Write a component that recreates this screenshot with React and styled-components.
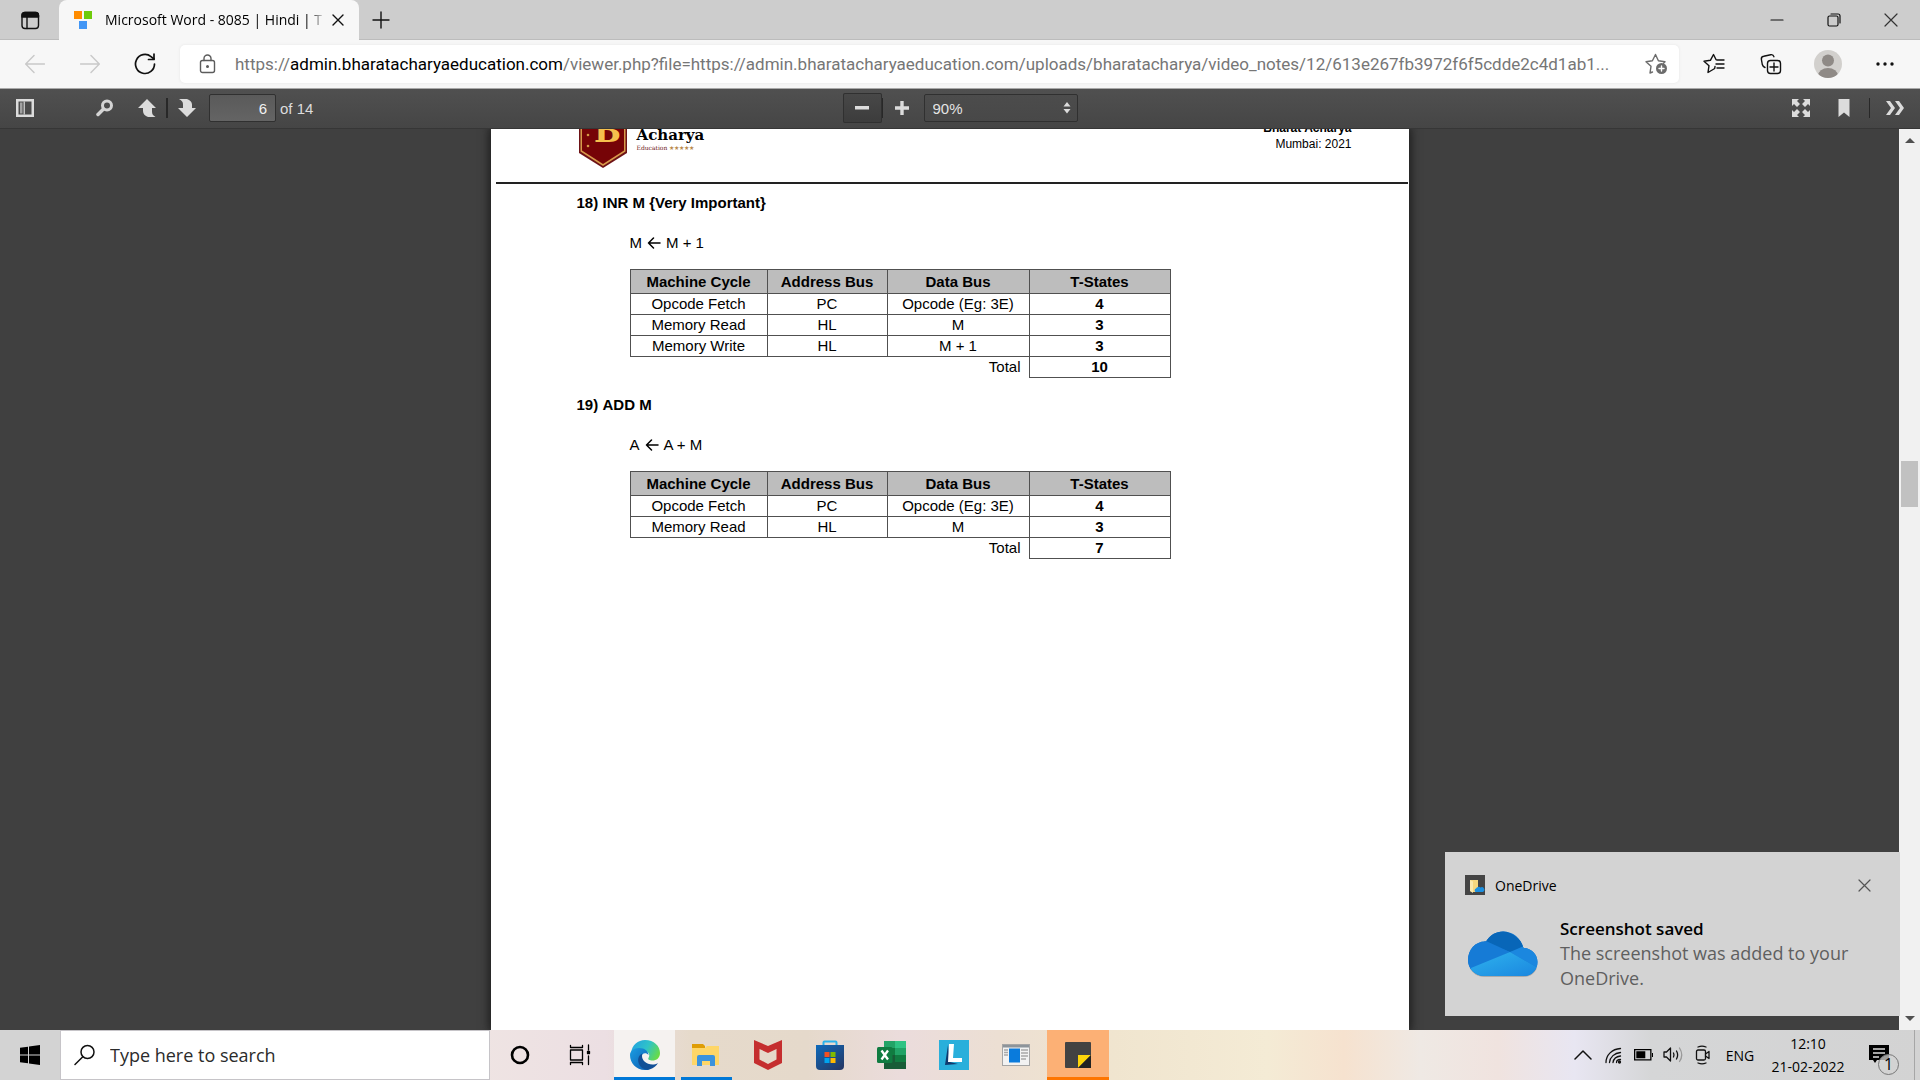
import React from "react";
import styled, { createGlobalStyle } from "styled-components";

const UI = `"Open Sans", "Noto Sans", sans-serif`;
const DOC = `"Liberation Sans", Arial, sans-serif`;

const Global = createGlobalStyle`
  *, *::before, *::after { box-sizing: border-box; }
  body { margin: 0; font-family: ${UI}; color: #000; background: #404040; }
  button, input, select { font: inherit; color: inherit; }
  button { border: 0; padding: 0; background: none; }
  svg { display: block; flex: none; }
`;

const Screen = styled.div`
  height: 100vh;
  display: flex;
  flex-direction: column;
  overflow: hidden;
`;

/* ---------- browser frame ---------- */

const TabStrip = styled.header`
  display: flex;
  height: 40px;
  flex: none;
  padding-right: 1px;
  background: #cdcdcd;
  box-shadow: inset 0 -1px #bcbcbc;
`;

const StripButton = styled.button`
  display: grid;
  place-items: center;
  width: ${(p) => p.$w}px;
  height: 40px;
`;

const Tab = styled.div`
  display: flex;
  align-items: center;
  width: 300px;
  padding: 0 11px 0 15px;
  background: #f7f7f7;
  border-radius: 8px 8px 0 0;
`;

const TabTitle = styled.span`
  flex: 1;
  margin-left: 13px;
  overflow: hidden;
  white-space: nowrap;
  font-size: 14px;
  line-height: 20px;
  mask-image: linear-gradient(to right, #000 91%, transparent 99%);
`;

const TabClose = styled.button`
  display: grid;
  place-items: center;
  width: 20px;
  height: 20px;
`;

const Spacer = styled.div`
  flex: 1;
`;

const AddressRow = styled.div`
  display: flex;
  align-items: center;
  height: 49px;
  flex: none;
  padding: 0 7px 1px;
  background: #f7f7f7;
  border-bottom: 1px solid #a9a9a9;
`;

const NavButton = styled.button`
  display: grid;
  place-items: center;
  width: ${(p) => p.$w}px;
  height: 40px;
`;

const AddressField = styled.div`
  display: flex;
  align-items: center;
  flex: 1;
  min-width: 0;
  height: 38px;
  margin: 0 6px 0 8px;
  padding: 0 12px 0 19px;
  gap: 18px;
  background: #fff;
  border-radius: 5px;
  box-shadow: 0 0 3px #e4e4e4;
`;

const Url = styled.div`
  flex: 1;
  min-width: 0;
  overflow: hidden;
  text-overflow: ellipsis;
  white-space: nowrap;
  font-family: Roboto, ${UI};
  font-size: 17px;
  line-height: 24px;
  color: #767676;
  b { font-weight: 400; color: #000; }
`;

/* ---------- PDF toolbar ---------- */

const PdfBar = styled.div`
  display: grid;
  grid-template-columns: 1fr auto 1fr;
  height: 40px;
  flex: none;
  padding-bottom: 2px;
  background: linear-gradient(#505050, #454545);
  box-shadow: inset 0 -1px #363636;
  font-family: ${DOC};
  font-size: 15px;
  color: #dcdcdc;
`;

const BarGroup = styled.div`
  display: flex;
  align-items: center;
  justify-content: ${(p) => p.$justify || "flex-start"};
  padding: ${(p) => p.$pad || "0"};
`;

const BarButton = styled.button`
  display: grid;
  place-items: center;
  width: ${(p) => p.$w || 38}px;
  height: 30px;
  color: #dcdcdc;
  border-radius: 2px;
  ${(p) => p.$raised && `background: linear-gradient(#484848, #3c3c3c); box-shadow: inset 0 0 0 1px #303030;`}
`;

const FindButton = styled(BarButton)`
  justify-items: end;
  padding-right: 14px;
`;

const Divider = styled.span`
  width: ${(p) => p.$w || 1}px;
  height: 20px;
  background: #282828;
`;

const PageInput = styled.input`
  width: 67px;
  height: 28px;
  margin-left: 3px;
  padding: 0 8px;
  text-align: right;
  color: #f2f2f2;
  background: linear-gradient(#5a5a5a, #646464);
  border: 1px solid #303030;
  border-radius: 2px;
`;

const PageTotal = styled.label`
  margin-left: 4px;
`;

const SelectWrap = styled.div`
  display: grid;
  align-items: center;
  width: 154px;
  margin-left: 3px;
  > * { grid-area: 1 / 1; }
  > svg { justify-self: end; margin-right: 7px; pointer-events: none; }
`;

const ZoomSelect = styled.select`
  appearance: none;
  width: 100%;
  height: 28px;
  padding: 0 8px;
  color: #e4e4e4;
  background: linear-gradient(#4c4c4c, #484848);
  border: 1px solid #303030;
  border-radius: 2px;
`;

/* ---------- document ---------- */

const Viewer = styled.main`
  display: flex;
  flex: 1;
  min-height: 0;
  background: #404040;
`;

const Canvas = styled.div`
  display: flex;
  justify-content: center;
  flex: 1;
  min-width: 0;
`;

const Sheet = styled.article`
  width: 918px;
  background: #fff;
  box-shadow: 0 0 9px 2px #1c1c1c;
  clip-path: inset(0 -16px);
  font-family: ${DOC};
`;

const SheetHeader = styled.div`
  display: flex;
  justify-content: space-between;
  align-items: flex-end;
  height: 55px;
  margin: 0 1px 0 5px;
  padding: 0 56px 13px 82px;
  overflow: hidden;
  border-bottom: 2px solid #222;
`;

const Brand = styled.div`
  display: flex;
  align-items: flex-end;
  gap: 9px;
`;

const BrandText = styled.div`
  padding-bottom: 17px;
`;

const BrandName = styled.div`
  font-family: "DejaVu Serif", serif;
  font-weight: 700;
  font-size: 15px;
  line-height: 17px;
`;

const BrandTag = styled.div`
  font-family: "DejaVu Serif", serif;
  font-size: 6px;
  line-height: 8px;
  color: #6b1420;
  i { font-style: normal; color: #b98a4c; }
`;

const Author = styled.div`
  padding-bottom: 17px;
  text-align: right;
  font-size: 12px;
  line-height: 16px;
`;

const Section = styled.section`
  padding: ${(p) => (p.$first ? 9 : 17)}px 0 0 86px;
`;

const Title = styled.h2`
  display: flex;
  margin: 0;
  font-size: 15px;
  line-height: 20px;
  span { width: 26px; }
`;

const Expression = styled.p`
  display: flex;
  align-items: center;
  gap: 5px;
  margin: 20px 0 16px 53px;
  font-size: 15px;
  line-height: 20px;
`;

const CycleTable = styled.table`
  width: 541px;
  margin-left: 53px;
  table-layout: fixed;
  border-collapse: collapse;
  font-size: 15px;
  line-height: 16px;
  text-align: center;
`;

const Th = styled.th`
  height: 24px;
  padding: 0;
  background: #bdbdbd;
  border: 1px solid #505050;
`;

const Td = styled.td`
  height: 21px;
  padding: 0;
  border: 1px solid #505050;
  font-weight: ${(p) => (p.$bold ? 700 : 400)};
`;

const TotalLabel = styled.td`
  height: 21px;
  padding: 0 8px 0 0;
  text-align: right;
`;

const Scrollbar = styled.div`
  display: flex;
  flex-direction: column;
  align-items: center;
  width: 21px;
  padding: 8px 0;
  background: #f1f1f1;
`;

const Thumb = styled.div`
  width: 17px;
  height: 46px;
  background: #c1c1c1;
`;

const Track = styled.div`
  flex: ${(p) => p.$grow} 0 0;
`;

/* ---------- notification ---------- */

const Toast = styled.aside`
  position: absolute;
  right: 20px;
  bottom: 64px;
  width: 455px;
  height: 164px;
  padding: 21px 21px 21px 20px;
  background: #d3d3d3;
`;

const ToastHead = styled.div`
  display: flex;
  align-items: center;
  gap: 10px;
  height: 24px;
  font-size: 14px;
`;

const ToastClose = styled.button`
  display: grid;
  place-items: center;
  width: 30px;
  height: 24px;
`;

const ToastBody = styled.div`
  display: flex;
  gap: 22px;
  padding-top: 19px;
`;

const ToastText = styled.div`
  width: 310px;
  font-size: 18px;
  line-height: 25px;
  color: #5f5f5f;
  strong { display: block; font-size: 17px; font-weight: 600; color: #000; }
`;

const CloudSlot = styled.div`
  padding: 15px 0 0 3px;
`;

/* ---------- taskbar ---------- */

const Taskbar = styled.footer`
  display: flex;
  align-items: stretch;
  height: 50px;
  flex: none;
  background: linear-gradient(
    to right,
    #d3d3d3 0, #d3d3d3 4%, #efe4e3 25%, #ecdfe3 31.5%, #e6dacb 36%,
    #e5d9cb 42%, #ebdcdc 47%, #ecdfd3 52%, #f0e5cf 58%, #f4ebd5 66%,
    #f6e2cf 70%, #efe9e4 74%, #f0e3df 78%, #e8e6f2 82%, #d5d6d7 86%, #d3d3d3 100%
  );
`;

const StartButton = styled.button`
  display: grid;
  place-items: center;
  width: 60px;
`;

const SearchBox = styled.label`
  display: flex;
  align-items: center;
  width: 430px;
  padding: 0 13px;
  gap: 14px;
  background: #fff;
  border: 1px solid #c6c4c8;
  input {
    flex: 1;
    border: 0;
    padding: 0;
    outline: 0;
    background: none;
    font-size: 18px;
    line-height: 24px;
  }
  input::placeholder { color: #2b2b2b; opacity: 1; }
`;

const TaskButton = styled.button`
  display: grid;
  place-items: center;
  width: ${(p) => p.$w || 62}px;
  background: ${(p) => p.$bg || "none"};
  box-shadow: ${(p) => (p.$line ? `inset 0 -3px ${p.$line}` : "none")};
`;

const RunningButton = styled(TaskButton)`
  background: linear-gradient(#0078d7, #0078d7) center bottom / 51px 3px no-repeat;
`;

const AppGroup = styled.div`
  display: flex;
  margin-left: 4px;
`;

const Tray = styled.div`
  display: flex;
  align-items: center;
  margin-left: auto;
`;

const TrayButton = styled.button`
  display: grid;
  place-items: center;
  width: ${(p) => p.$w || 30}px;
  height: 50px;
  font-size: 14px;
`;

const Clock = styled.time`
  width: 92px;
  text-align: center;
  font-size: 14px;
  line-height: 23px;
`;

const DesktopEdge = styled.span`
  align-self: stretch;
  width: 6px;
  border-left: 1px solid #a6a6a6;
`;

/* ---------- icons ---------- */

const Line = ({ w = 20, h = w, sw = 1.4, c = "#111", children }) => (
  <svg width={w} height={h} viewBox={`0 0 ${w} ${h}`} fill="none" stroke={c} strokeWidth={sw} strokeLinecap="round" strokeLinejoin="round" aria-hidden="true">
    {children}
  </svg>
);
const Fill = ({ w = 20, h = w, c = "#dcdcdc", children }) => (
  <svg width={w} height={h} viewBox={`0 0 ${w} ${h}`} fill={c} aria-hidden="true">{children}</svg>
);

const TabActions = () => (
  <Line sw={1.4}>
    <rect x="2" y="2.5" width="16.5" height="16" rx="3" />
    <path d="M2 7V5.500a3 3 0 0 1 3-3h10.500a3 3 0 0 1 3 3V7z" fill="#111" />
    <path d="M7 7v11.500" />
  </Line>
);
const Favicon = () => (
  <Fill w={18}>
    <rect width="8" height="8" fill="#ff8c00" />
    <rect x="10" width="8" height="8" fill="#6fcb0b" />
    <rect x="5" y="10" width="8" height="8" fill="#4296f5" />
  </Fill>
);
const Cross = ({ s = 10, sw = 1.4, c }) => (
  <Line w={s + 2} sw={sw} c={c}><path d={`M1 1l${s} ${s}M${s + 1} 1L1 ${s + 1}`} /></Line>
);
const Back = () => <Line sw={1.4} c="#c9c9c9"><path d="M19.500 10H1M9 1.500L.7 10 9 18.500" /></Line>;
const Forward = () => <Line sw={1.4} c="#c9c9c9"><path d="M.5 10H19M11 1.500l8.300 8.500L11 18.500" /></Line>;
const Refresh = () => (
  <Line w={22} sw={1.7}>
    <path d="M20.500 11a9.500 9.500 0 1 1-3.500-7.400L20 6" /><path d="M20 1v5.500h-5.500" />
  </Line>
);
const Lock = () => (
  <Line w={18} h={20} c="#5c5c5c">
    <rect x="1.500" y="6.500" width="14" height="12" rx="2" />
    <path d="M5 6.500V4.500a3.500 3.500 0 0 1 7 0v2" /><circle cx="8.500" cy="12.500" r=".8" fill="#5c5c5c" />
  </Line>
);
const StarAdd = () => (
  <Line w={22} c="#6c6c6c">
    <path d="M7.500 19l-2.500 1 1-6.700L1 8.700l6.400-.9L10.500 1.500l2.900 6.300 6.600.9-1.500 1.600" />
    <circle cx="16.500" cy="15.500" r="5.500" fill="#6c6c6c" stroke="none" />
    <path d="M16.500 13v5M14 15.500h5" stroke="#fff" />
  </Line>
);
const Favorites = () => (
  <Line w={22}>
    <path d="M12 13.500l-.3 2L5 19.500l1-6.800L1 8.200l6.400-.9L10.500 1.500l2.600 5.300M14 7h7M13 11h8M14 15h7" />
  </Line>
);
const Collections = () => (
  <Line w={22}>
    <rect x="7.500" y="7.500" width="13" height="13" rx="3" />
    <path d="M14 10v8M10 14h8M5 14.500c-1.600-.6-2.300-1.500-2.700-3L1.400 6.500C1.100 4.700 2 3.500 3.700 3.200l7-1.500c1.500-.3 2.800.4 3.200 2" />
  </Line>
);
const Avatar = () => (
  <Fill w={28}>
    <defs><clipPath id="avatar"><circle cx="14" cy="14" r="14" /></clipPath></defs>
    <g clipPath="url(#avatar)">
      <rect width="28" height="28" fill="#d2d0cd" />
      <circle cx="14" cy="10.500" r="6" fill="#8f8a86" />
      <ellipse cx="14" cy="26" rx="10" ry="8" fill="#8f8a86" />
    </g>
  </Fill>
);
const Dots = () => (
  <Fill w={18} h={4} c="#111"><circle cx="2" cy="2" r="1.700" /><circle cx="9" cy="2" r="1.700" /><circle cx="16" cy="2" r="1.700" /></Fill>
);
const SidebarIcon = () => (
  <Fill w={18}>
    <path fillRule="evenodd" d="M0 0h18v18H0zM2.500 2.500v13h13v-13z" />
    <path d="M4 3.500h2.500v11H4z" opacity=".6" /><path d="M7.500 2.500H9v13H7.500z" opacity=".8" />
  </Fill>
);
const PdfSearch = () => (
  <Line w={18} sw={3} c="#d4d4d4"><circle cx="11" cy="6.500" r="4.500" /><path d="M7.500 10L2 15.500" strokeWidth="3.500" /></Line>
);
const UpArrow = () => <Fill w={18}><path d="M9 0l9 9h-4v3.500c0 2.500 1 4 3.500 5.500H10c-3-1-5-3-5-6V9H0z" /></Fill>;
const DownArrow = () => <Fill w={18}><path d="M9 18l9-9h-4V5.500c0-2.500-2-4.500-5-5.500H1c3 1.500 4 3 4 5.500V9H0z" /></Fill>;
const MinusBar = () => <Fill w={14} h={4}><rect width="14" height="3.500" /></Fill>;
const PlusBar = () => <Fill w={14}><path d="M5.300 0h3.400v5.300H14v3.400H8.700V14H5.300V8.700H0V5.300h5.300z" /></Fill>;
const UpDown = () => <Fill w={8} h={12}><path d="M4 0l3.500 4.500h-7zM4 11.500L.5 7h7z" /></Fill>;
const Fullscreen = () => (
  <Fill w={18}>
    <path d="M0 0h7L5 2l3 3-3 3-3-3-2 2zM18 0v7l-2-2-3 3-3-3 3-3-2-2zM0 18v-7l2 2 3-3 3 3-3 3 2 2zM18 18h-7l2-2-3-3 3-3 3 3 2-2z" />
  </Fill>
);
const Bookmark = () => <Fill w={12} h={18}><path d="M.5 0h11v18L6 13.500.5 18z" /></Fill>;
const Chevrons = () => <Fill w={18} h={14}><path d="M0 0h4l5 7-5 7H0l5-7zM9 0h4l5 7-5 7H9l5-7z" /></Fill>;

const Badge = () => (
  <svg width="50" height="80" viewBox="0 0 50 80" aria-hidden="true">
    <path d="M1 0v64l24 15 24-15V0z" fill="#6d1216" />
    <path d="M2.500 0v62.500L25 77l22.500-14.500V0z" fill="#d89a4b" />
    <path d="M4 0v61.500L25 75l21-13.500V0z" fill="#760407" />
    <g fill="#d39a45"><circle cx="10" cy="46" r="1.300" /><circle cx="10" cy="57" r="1.300" /></g>
    <text x="16" y="53" fontFamily="DejaVu Serif, serif" fontWeight="700" fontSize="32" fill="#f6c04d">B</text>
  </svg>
);
const LeftArrow = () => <Line w={14} h={12} sw={1.500} c="#000"><path d="M13 6H1.500M6.500 1L1.500 6l5 5" /></Line>;

const FolderBadge = () => (
  <Fill w={20}>
    <rect width="20" height="20" fill="#444" />
    <path d="M5 5h8v12H7l-2-1z" fill="#f5d77e" /><path d="M5 5l3 1.500V18l-3-2z" fill="#fbe9ae" />
    <path d="M10.500 17a2 2 0 0 1 .5-3.500 3 3 0 0 1 4.500-1 2.500 2.500 0 0 1 2.500 4.500z" fill="#1b8fe0" />
  </Fill>
);
const Cloud = () => (
  <svg width="70" height="48" viewBox="0 0 70 48" aria-hidden="true">
    <defs>
      <clipPath id="cloud"><path d="M16 45A16 16 0 0 1 0 29C0 18 8 10 18 10.500 22 4 28 .5 35 .5c10 0 18 6.500 20.500 16.500C63 17 69.500 23 69.500 31S63.500 45 56 45z" /></clipPath>
      <linearGradient id="cloudFront" x1="0" y1="0" x2="1" y2="1"><stop stopColor="#2fb4ee" /><stop offset="1" stopColor="#1a86df" /></linearGradient>
    </defs>
    <path d="M16 46h40c6 0 11-4 13-9H2c2 5 8 9 14 9z" fill="#777" opacity=".45" />
    <g clipPath="url(#cloud)">
      <rect width="70" height="45" fill="#1276cf" />
      <path d="M16 11C20 2 28-2 36 0s18 8 20 17l-14 4z" fill="#0866b8" />
      <path d="M0 10h18l24 11L0 40z" fill="#167bd6" />
      <path d="M42 21l14-6 14 8v14z" fill="#1b87df" />
      <path d="M3 37l39-16 28 16v8H0z" fill="url(#cloudFront)" />
    </g>
  </svg>
);

const Windows = () => <Fill w={20} c="#000"><path d="M0 2.800l8-1.100v7.800H0zM9 1.500L20 0v9.500H9zM0 10.500h8v7.800l-8-1.100zM9 10.500h11V20L9 18.500z" /></Fill>;
const SearchIcon = () => <Line w={22} sw={1.500}><circle cx="13.500" cy="8" r="6.500" /><path d="M8.800 12.700L1 20.500" /></Line>;
const Cortana = () => <Line w={22} sw={2.600} c="#000"><circle cx="11" cy="11" r="8" /></Line>;
const TaskView = () => (
  <Line w={22} c="#000" sw={1.300}>
    <rect x="1.500" y="6" width="12" height="10" /><path d="M1.500 1.500v2h12v-2M1.500 20.500v-2h12v2M19.500 1v5M19.500 12v8.500" /><path d="M18.500 7.500h2v2h-2z" fill="#000" />
  </Line>
);
const Edge = () => (
  <svg width="30" height="30" viewBox="0 0 30 30" aria-hidden="true">
    <defs>
      <linearGradient id="edgeTop" x1="0" y1=".3" x2="1" y2=".7"><stop stopColor="#24a5df" /><stop offset=".5" stopColor="#2fc3c8" /><stop offset="1" stopColor="#6cdd3f" /></linearGradient>
      <linearGradient id="edgeLow" x1="0" y1="0" x2="1" y2="1"><stop stopColor="#1b9de2" /><stop offset="1" stopColor="#0d5bb0" /></linearGradient>
    </defs>
    <path d="M1 13C2 5 8 0 15 0c9 0 15 6 15 13 0 5-3.500 7.500-7.500 7.500-3 0-5-1-4-2.500 2.500-4-1-7.500-6-7.500C7 10.500 2 11 1 13z" fill="url(#edgeTop)" />
    <path d="M0 15c0-4 4-7 9-7 6 0 9.500 3.500 9.500 7-3-3.500-7.500-1-7.500 3 0 6 4.500 10.500 9 11.500-2 .5-3.500.5-5 .5C6 30 0 23 0 15z" fill="url(#edgeLow)" />
    <path d="M12.500 13.500c-4 1.500-5.500 6-3.500 10.500s7 6.500 11 5.300c3.500-1 6.500-3.500 8-6.300-4 2.500-10 2-13.500-1.500-2.500-2.500-3-5.500-2-8z" fill="#124f96" />
  </svg>
);
const Explorer = () => (
  <Fill w={28} h={24}>
    <path d="M0 1h11l2 2v3H0z" fill="#df9d05" /><path d="M0 5h13l2-2h12v19H0z" fill="#fed667" />
    <path d="M5 23V14q0-2 2-2h14q2 0 2 2v9h-5v-5h-8v5z" fill="#3b93dd" />
  </Fill>
);
const McAfee = () => (
  <Fill w={28} h={30}><path fillRule="evenodd" d="M0 0l14 6L28 0v23l-14 7L0 23zM5.500 9v10.500L14 24l8.500-4.500V9L14 13z" fill="#c52e2f" /></Fill>
);
const Store = () => (
  <svg width="30" height="30" viewBox="0 0 30 30" aria-hidden="true">
    <defs><linearGradient id="store" x1="0" y1="0" x2=".8" y2="1"><stop stopColor="#0d6abb" /><stop offset="1" stopColor="#243a69" /></linearGradient></defs>
    <path d="M8.500 7V2.500q0-1 1-1h11q1 0 1 1V7" fill="none" stroke="#29b3ec" strokeWidth="2" />
    <path d="M1 5h28v21q0 4-4 4H5q-4 0-4-4z" fill="url(#store)" />
    <path d="M9.500 12h5v5h-5z" fill="#f25022" /><path d="M15.500 12h5v5h-5z" fill="#7fba00" />
    <path d="M9.500 18h5v5h-5z" fill="#00a4ef" /><path d="M15.500 18h5v5h-5z" fill="#ffb900" />
  </svg>
);
const Excel = () => (
  <svg width="30" height="28" viewBox="0 0 30 28" aria-hidden="true">
    <path d="M7 0h22v7H7z" fill="#2fc383" /><path d="M7 0h11v7H7z" fill="#23a366" />
    <path d="M7 7h22v7H7z" fill="#21a366" /><path d="M7 7h11v7H7z" fill="#107c41" />
    <path d="M7 14h22v7H7z" fill="#107c41" /><path d="M7 14h11v14H7z" fill="#185c37" /><path d="M7 21h22v7H7z" fill="#185c37" />
    <rect y="6" width="15.500" height="16" rx="1.500" fill="#107c41" />
    <path d="M4.500 9.500l6.500 9M11 9.500l-6.500 9" stroke="#fff" strokeWidth="2.300" />
  </svg>
);
const LApp = () => (
  <svg width="30" height="30" viewBox="0 0 30 30" aria-hidden="true">
    <rect width="30" height="30" fill="#29afdb" />
    <path d="M9 5L6 25l13-1-8-2z" fill="#103a6e" /><path d="M10 4h5l-1 14h9v4H9z" fill="#fff" />
  </svg>
);
const WindowApp = () => (
  <svg width="28" height="23" viewBox="0 0 28 23" aria-hidden="true">
    <rect x=".5" y=".5" width="27" height="21" fill="#f2f2f2" stroke="#a5a5a5" />
    <path d="M1 1h26v2.500H1z" fill="#8d949a" /><path d="M2 6h4M2 8.500h4M2 11h4M19 6h7M19 9h7M19 12h7M19 15h5" stroke="#a8a8a8" strokeWidth="1.500" />
    <path d="M7 4.500h11v14H7z" fill="#0a7bdc" />
  </svg>
);
const Sticky = () => (
  <svg width="26" height="26" viewBox="0 0 26 26" aria-hidden="true">
    <rect width="26" height="26" rx="1" fill="#424242" /><path d="M13 26V13h13z" fill="#fdd50a" /><path d="M13 26l13-13v13z" fill="#222" />
  </svg>
);
const Caret = () => <Line w={18} h={10} sw={1.500}><path d="M1 9l8-8 8 8" /></Line>;
const Wifi = () => (
  <Line w={17} sw={1.300}>
    <path d="M1 15.500C1 8 7 2 15.500 1.500M4.500 15.500C5 10 9.500 6 15.500 5.500M8 15.500c.5-3.500 3.500-6 7.500-6.500M11.500 15.500c0-1.500 1.500-3 4-3" /><circle cx="14.500" cy="15" r="1" fill="#111" />
  </Line>
);
const Battery = () => (
  <Fill w={19} h={12} c="#000"><path fillRule="evenodd" d="M0 0h17.500v11.500H0zM1.300 1.300v8.900h14.900V1.300z" /><path d="M2.300 2.300h9v6.900h-9zM18 4h1v4h-1z" /></Fill>
);
const Sound = () => (
  <Line w={21} h={18} sw={1.300}>
    <path d="M1 6h2.500L7.500 2v13l-4-4H1zM10.500 7q1 2 0 4M13.500 5q2.300 4 0 8" /><path d="M16.500 2q4.500 7 0 13.500" stroke="#999" />
  </Line>
);
const Meet = () => (
  <Line w={16} h={20} sw={1.300}>
    <rect x="1.500" y="5" width="9" height="10" rx="1.500" /><path d="M10.500 9L14 6.500v7L10.500 11M3 2Q7 .3 11 2M3 18q4 1.700 8 0" />
  </Line>
);
const Notify = () => (
  <svg width="32" height="42" viewBox="0 -10 32 42" aria-hidden="true">
    <path d="M1 1h20v15H9l-2 3-2-3H1z" fill="#000" /><path d="M5 5h12M5 9h12M5 13h6" stroke="#dcdcdc" strokeWidth="1.300" />
    <circle cx="20.500" cy="20.500" r="10" fill="#d3d3d3" fillOpacity=".75" stroke="#777" />
    <text x="20.500" y="26" textAnchor="middle" fontFamily="Open Sans, sans-serif" fontSize="16">1</text>
  </svg>
);
const ScrollArrow = ({ down }) => <Fill w={10} h={6} c="#505050"><path d={down ? "M0 0h10L5 5z" : "M0 6h10L5 1z"} /></Fill>;

/* ---------- content ---------- */

const SECTIONS = [
  {
    no: 18, title: "INR M {Very Important}", left: "M", right: "M + 1", total: 10,
    rows: [
      ["Opcode Fetch", "PC", "Opcode (Eg: 3E)", 4],
      ["Memory Read", "HL", "M", 3],
      ["Memory Write", "HL", "M + 1", 3],
    ],
  },
  {
    no: 19, title: "ADD M", left: "A", right: "A + M", total: 7,
    rows: [
      ["Opcode Fetch", "PC", "Opcode (Eg: 3E)", 4],
      ["Memory Read", "HL", "M", 3],
    ],
  },
];

const Instruction = ({ data, first }) => (
  <Section $first={first}>
    <Title><span>{data.no})</span>{data.title}</Title>
    <Expression>{data.left}<LeftArrow />{data.right}</Expression>
    <CycleTable>
      <colgroup><col width="137" /><col width="120" /><col width="142" /><col width="141" /></colgroup>
      <thead>
        <tr>{["Machine Cycle", "Address Bus", "Data Bus", "T-States"].map((h) => <Th key={h}>{h}</Th>)}</tr>
      </thead>
      <tbody>
        {data.rows.map((r) => (
          <tr key={r[0]}>{r.map((c, i) => <Td key={i} $bold={i === 3}>{c}</Td>)}</tr>
        ))}
        <tr><TotalLabel colSpan={3}>Total</TotalLabel><Td $bold>{data.total}</Td></tr>
      </tbody>
    </CycleTable>
  </Section>
);

export default function App() {
  return (
    <Screen>
      <Global />
      <TabStrip>
        <StripButton $w={59} aria-label="Tab actions"><TabActions /></StripButton>
        <Tab>
          <Favicon />
          <TabTitle>Microsoft Word - 8085 | Hindi | T</TabTitle>
          <TabClose aria-label="Close tab"><Cross /></TabClose>
        </Tab>
        <StripButton $w={44} aria-label="New tab"><Line w={18}><path d="M9 1v16M1 9h16" /></Line></StripButton>
        <Spacer />
        <StripButton $w={57} aria-label="Minimize"><Line w={14} h={2} sw={1.2}><path d="M1 1h12" /></Line></StripButton>
        <StripButton $w={57} aria-label="Restore">
          <Line w={14} sw={1.2}><rect x="1" y="3" width="10" height="10" rx="1.500" /><path d="M4 1h7a2 2 0 0 1 2 2v7" /></Line>
        </StripButton>
        <StripButton $w={57} aria-label="Close"><Cross s={12} sw={1.2} c="#333" /></StripButton>
      </TabStrip>
      <AddressRow>
        <NavButton $w={55} aria-label="Back"><Back /></NavButton>
        <NavButton $w={55} aria-label="Forward"><Forward /></NavButton>
        <NavButton $w={55} aria-label="Refresh"><Refresh /></NavButton>
        <AddressField>
          <Lock />
          <Url>https://<b>admin.bharatacharyaeducation.com</b>/viewer.php?file=https://admin.bharatacharyaeducation.com/uploads/bharatacharya/video_notes/12/613e267fb3972f6f5cdde2c4d1ab1...</Url>
          <StarAdd />
        </AddressField>
        <NavButton $w={57} aria-label="Favorites"><Favorites /></NavButton>
        <NavButton $w={57} aria-label="Collections"><Collections /></NavButton>
        <NavButton $w={57} aria-label="Profile"><Avatar /></NavButton>
        <NavButton $w={57} aria-label="Settings and more"><Dots /></NavButton>
      </AddressRow>
      <PdfBar>
        <BarGroup $pad="0 0 0 6px">
          <BarButton aria-label="Toggle sidebar"><SidebarIcon /></BarButton>
          <FindButton $w={84} aria-label="Find"><PdfSearch /></FindButton>
          <BarButton aria-label="Previous page"><UpArrow /></BarButton>
          <Divider $w={2} />
          <BarButton aria-label="Next page"><DownArrow /></BarButton>
          <PageInput id="page" defaultValue="6" />
          <PageTotal htmlFor="page">of 14</PageTotal>
        </BarGroup>
        <BarGroup>
          <BarButton $raised $w={39} aria-label="Zoom out"><MinusBar /></BarButton>
          <Divider />
          <BarButton aria-label="Zoom in"><PlusBar /></BarButton>
          <SelectWrap>
            <ZoomSelect aria-label="Zoom" defaultValue="90%"><option>90%</option></ZoomSelect>
            <UpDown />
          </SelectWrap>
        </BarGroup>
        <BarGroup $justify="flex-end">
          <BarButton $w={36} aria-label="Presentation mode"><Fullscreen /></BarButton>
          <BarButton $w={50} aria-label="Current view"><Bookmark /></BarButton>
          <Divider />
          <BarButton $w={50} aria-label="Tools"><Chevrons /></BarButton>
        </BarGroup>
      </PdfBar>
      <Viewer>
        <Canvas>
          <Sheet>
            <SheetHeader>
              <Brand>
                <Badge />
                <BrandText>
                  <BrandName>Acharya</BrandName>
                  <BrandTag>Education <i>★★★★★</i></BrandTag>
                </BrandText>
              </Brand>
              <Author><b>Bharat Acharya</b><br />Mumbai: 2021</Author>
            </SheetHeader>
            {SECTIONS.map((s, i) => <Instruction key={s.no} data={s} first={i === 0} />)}
          </Sheet>
        </Canvas>
        <Scrollbar>
          <ScrollArrow /><Track $grow={318} /><Thumb /><Track $grow={509} /><ScrollArrow down />
        </Scrollbar>
      </Viewer>
      <Taskbar>
        <StartButton aria-label="Start"><Windows /></StartButton>
        <SearchBox><SearchIcon /><input type="text" aria-label="Search" placeholder="Type here to search" /></SearchBox>
        <TaskButton $w={60} aria-label="Cortana"><Cortana /></TaskButton>
        <TaskButton $w={60} aria-label="Task view"><TaskView /></TaskButton>
        <AppGroup>
          <TaskButton $w={61} $bg="#f5f2f0" $line="#0078d7" aria-label="Edge"><Edge /></TaskButton>
          <RunningButton aria-label="File Explorer"><Explorer /></RunningButton>
          <TaskButton aria-label="McAfee"><McAfee /></TaskButton>
          <TaskButton aria-label="Store"><Store /></TaskButton>
          <TaskButton aria-label="Excel"><Excel /></TaskButton>
          <TaskButton aria-label="L"><LApp /></TaskButton>
          <TaskButton aria-label="Window"><WindowApp /></TaskButton>
          <TaskButton $bg="#fcb075" $line="#fe7500" aria-label="Sticky Notes"><Sticky /></TaskButton>
        </AppGroup>
        <Tray>
          <TrayButton aria-label="Hidden icons"><Caret /></TrayButton>
          <TrayButton aria-label="Wi-Fi"><Wifi /></TrayButton>
          <TrayButton aria-label="Battery"><Battery /></TrayButton>
          <TrayButton aria-label="Volume"><Sound /></TrayButton>
          <TrayButton aria-label="Meet now"><Meet /></TrayButton>
          <TrayButton $w={44} aria-label="Language">ENG</TrayButton>
          <Clock>12:10<br />21-02-2022</Clock>
          <TrayButton $w={60} aria-label="Notifications"><Notify /></TrayButton>
          <DesktopEdge />
        </Tray>
      </Taskbar>
      <Toast>
        <ToastHead>
          <FolderBadge />OneDrive<Spacer />
          <ToastClose aria-label="Dismiss"><Cross s={11} sw={1.2} c="#555" /></ToastClose>
        </ToastHead>
        <ToastBody>
          <CloudSlot><Cloud /></CloudSlot>
          <ToastText><strong>Screenshot saved</strong>The screenshot was added to your OneDrive.</ToastText>
        </ToastBody>
      </Toast>
    </Screen>
  );
}
